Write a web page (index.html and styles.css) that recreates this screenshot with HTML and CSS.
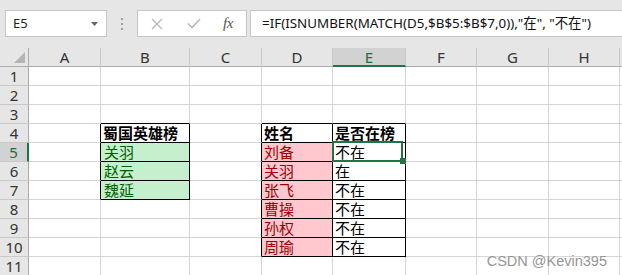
FILE: index.html
```html
<!DOCTYPE html>
<html lang="zh-CN">
<head>
<meta charset="utf-8">
<title>Excel</title>
<link rel="stylesheet" href="styles.css">
</head>
<body>
<div class="app">
  <div class="toolbar">
    <div class="namebox">
      <span class="nb-text">E5</span>
      <svg class="caret" width="8" height="5" viewBox="0 0 8 5"><path d="M0 0 H7 L3.5 4 Z" fill="#666"/></svg>
    </div>
    <div class="dots">
      <svg width="3" height="12" viewBox="0 0 3 12"><rect x="0" y="0" width="2" height="2" fill="#a0a0a0"/><rect x="0" y="5" width="2" height="2" fill="#a0a0a0"/><rect x="0" y="10" width="2" height="2" fill="#a0a0a0"/></svg>
    </div>
    <div class="fbtns">
      <svg class="ic-x" width="12" height="12" viewBox="0 0 12 12"><path d="M1 1 L11 11 M11 1 L1 11" stroke="#b8b8b8" stroke-width="1.3" fill="none"/></svg>
      <svg class="ic-ok" width="14" height="11" viewBox="0 0 14 11"><path d="M1 5.5 L5 9.5 L13 1" stroke="#b8b8b8" stroke-width="1.6" fill="none"/></svg>
      <span class="fx">fx</span>
    </div>
    <div class="formula">=IF(ISNUMBER(MATCH(D5,$B$5:$B$7,0)),"在", "不在")</div>
  </div>

  <div class="sheet">
    <!-- header row -->
    <div class="corner"><svg width="11" height="11" viewBox="0 0 11 11"><path d="M11 0 V11 H0 Z" fill="#b5b5b5"/></svg></div>
    <div class="h">A</div><div class="h">B</div><div class="h">C</div><div class="h">D</div>
    <div class="h sel">E</div><div class="h">F</div><div class="h">G</div><div class="h">H</div><div class="h end"></div>

    <!-- row 1 -->
    <div class="r">1</div><div class="c"></div><div class="c"></div><div class="c"></div><div class="c"></div><div class="c"></div><div class="c"></div><div class="c"></div><div class="c"></div><div class="c end"></div>
    <!-- row 2 -->
    <div class="r">2</div><div class="c"></div><div class="c"></div><div class="c"></div><div class="c"></div><div class="c"></div><div class="c"></div><div class="c"></div><div class="c"></div><div class="c end"></div>
    <!-- row 3 -->
    <div class="r">3</div><div class="c"></div><div class="c bb"></div><div class="c"></div><div class="c bb"></div><div class="c bb"></div><div class="c"></div><div class="c"></div><div class="c"></div><div class="c end"></div>
    <!-- row 4 -->
    <div class="r">4</div><div class="c br"></div><div class="c br bb b">蜀国英雄榜</div><div class="c br"></div><div class="c br bb b">姓名</div><div class="c br bb b">是否在榜</div><div class="c"></div><div class="c"></div><div class="c"></div><div class="c end"></div>
    <!-- row 5 -->
    <div class="r rsel">5</div><div class="c br"></div><div class="c br bb g">关羽</div><div class="c br"></div><div class="c br bb p">刘备</div><div class="c br bb active">不在<div class="selbox"><span class="handle"></span></div></div><div class="c"></div><div class="c"></div><div class="c"></div><div class="c end"></div>
    <!-- row 6 -->
    <div class="r">6</div><div class="c br"></div><div class="c br bb g">赵云</div><div class="c br"></div><div class="c br bb p">关羽</div><div class="c br bb">在</div><div class="c"></div><div class="c"></div><div class="c"></div><div class="c end"></div>
    <!-- row 7 -->
    <div class="r">7</div><div class="c br"></div><div class="c br bb g">魏延</div><div class="c br"></div><div class="c br bb p">张飞</div><div class="c br bb">不在</div><div class="c"></div><div class="c"></div><div class="c"></div><div class="c end"></div>
    <!-- row 8 -->
    <div class="r">8</div><div class="c"></div><div class="c"></div><div class="c br"></div><div class="c br bb p">曹操</div><div class="c br bb">不在</div><div class="c"></div><div class="c"></div><div class="c"></div><div class="c end"></div>
    <!-- row 9 -->
    <div class="r">9</div><div class="c"></div><div class="c"></div><div class="c br"></div><div class="c br bb p">孙权</div><div class="c br bb">不在</div><div class="c"></div><div class="c"></div><div class="c"></div><div class="c end"></div>
    <!-- row 10 -->
    <div class="r">10</div><div class="c"></div><div class="c"></div><div class="c br"></div><div class="c br bb p">周瑜</div><div class="c br bb">不在</div><div class="c"></div><div class="c"></div><div class="c"></div><div class="c end"></div>
    <!-- row 11 -->
    <div class="r">11</div><div class="c"></div><div class="c"></div><div class="c"></div><div class="c"></div><div class="c"></div><div class="c"></div><div class="c"></div><div class="c"></div><div class="c end"></div>
  </div>

  <div class="watermark">CSDN @Kevin395</div>
</div>
</body>
</html>
```

FILE: styles.css
```css
* { box-sizing: border-box; }
html, body {
  margin: 0;
  padding: 0;
  width: 622px;
  height: 275px;
  overflow: hidden;
  background: #ffffff;
}
.app {
  position: relative;
  width: 622px;
  height: 275px;
  overflow: hidden;
  font-family: "Noto Sans", "Open Sans", "Noto Sans CJK SC", sans-serif;
}

/* ---------- toolbar ---------- */
.toolbar {
  height: 48px;
  background: #e6e6e6;
  display: flex;
  align-items: flex-start;
  padding: 10px 0 0 5px;
}
.namebox {
  width: 102px;
  height: 27px;
  background: #fff;
  border: 1px solid #c6c6c6;
  display: flex;
  align-items: center;
  justify-content: space-between;
  padding: 0 7px 0 7px;
}
.nb-text {
  font-size: 13px;
  color: #222;
  line-height: 25px;
}
.caret { margin-top: 1px; }
.dots {
  width: 30px;
  height: 27px;
  display: flex;
  align-items: center;
  justify-content: center;
}
.fbtns {
  width: 110px;
  height: 27px;
  background: #fff;
  border: 1px solid #c6c6c6;
  display: flex;
  align-items: center;
  padding-left: 13px;
}
.ic-x { margin-right: 24px; }
.ic-ok { margin-right: 22px; }
.fx {
  font-family: "Liberation Serif", "DejaVu Serif", serif;
  font-style: italic;
  font-size: 15px;
  color: #555;
  letter-spacing: -0.5px;
  line-height: 25px;
}
.formula {
  flex: 1;
  margin-left: 3px;
  margin-right: -10px;
  height: 27px;
  background: #fff;
  border: 1px solid #c6c6c6;
  padding-left: 11px;
  font-size: 13.4px;
  line-height: 25px;
  color: #111;
  white-space: nowrap;
}

/* ---------- sheet grid ---------- */
.sheet {
  display: grid;
  grid-template-columns: 29px 72px 89px 72px 71px 73px 71px 72px 71px 1fr;
  grid-template-rows: 19px repeat(11, 19px);
}
.corner {
  background: #e6e6e6;
  border-right: 1px solid #ababab;
  border-bottom: 1px solid #ababab;
  display: flex;
  align-items: flex-end;
  justify-content: flex-end;
  padding: 0 3px 3px 0;
}
.corner svg { display: block; }
.h {
  background: #e6e6e6;
  border-right: 1px solid #c9c9c9;
  border-bottom: 1px solid #ababab;
  text-align: center;
  font-size: 15px;
  line-height: 18px;
  color: #333;
}
.h.sel {
  background: #d2d2d2;
  border-bottom: 2px solid #217346;
  color: #1d6b40;
}
.h.end { border-right: none; }
.r {
  background: #e6e6e6;
  border-right: 1px solid #ababab;
  border-bottom: 1px solid #c9c9c9;
  text-align: center;
  font-size: 15px;
  line-height: 18px;
  color: #333;
}
.r.rsel {
  background: #d2d2d2;
  border-right: 2px solid #217346;
  color: #1d6b40;
}
.c {
  border-right: 1px solid #d4d4d4;
  border-bottom: 1px solid #d4d4d4;
  font-family: "Noto Sans CJK SC", sans-serif;
  font-size: 15px;
  line-height: 18px;
  padding-left: 2px;
  color: #000;
  white-space: nowrap;
}
.c.end { border-right: none; }
.c.br { border-right-color: #000; }
.c.bb { border-bottom-color: #000; }
.c.b { font-weight: bold; }
.c.g { background: #c6efce; color: #006100; padding-left: 3px; }
.c.p { background: #ffc7ce; color: #9c0006; }
.c.active { position: relative; }
.selbox {
  position: absolute;
  left: -1px;
  top: -2px;
  width: 71px;
  height: 21px;
  border: 2px solid #217346;
}
.handle {
  position: absolute;
  right: -5px;
  bottom: -4px;
  width: 6px;
  height: 6px;
  background: #217346;
}

/* ---------- watermark ---------- */
.watermark {
  position: absolute;
  right: 15px;
  bottom: 6px;
  font-family: "Liberation Sans", Arial, sans-serif;
  font-size: 14.5px;
  line-height: 16px;
  color: #959595;
  text-shadow: 0 0 2px #fff, 0 0 2px #fff;
}
```
